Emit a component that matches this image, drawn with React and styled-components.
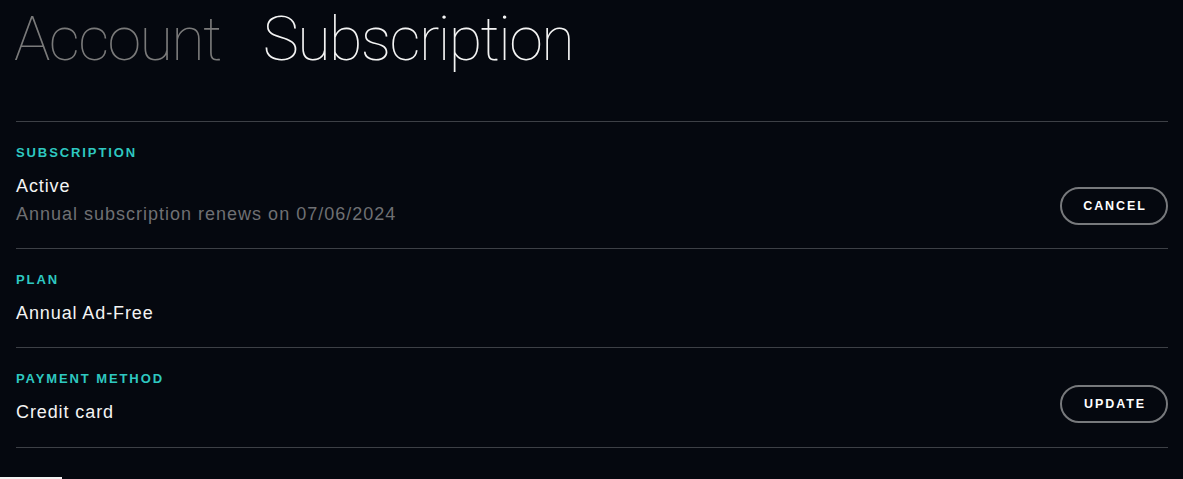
import React from 'react';
import styled, { createGlobalStyle } from 'styled-components';

const GlobalStyle = createGlobalStyle`
  html, body {
    margin: 0;
    padding: 0;
    background: #05080f;
  }
  body {
    font-family: "Liberation Sans", Arial, sans-serif;
    color: #f2f2f2;
    overflow: hidden;
  }
`;

const Page = styled.div`
  width: 1183px;
  height: 479px;
  box-sizing: border-box;
  padding: 0 15px 0 16px;
  display: flex;
  flex-direction: column;
  position: relative;
`;

const Title = styled.h1`
  margin: 0 0 0 -2px;
  padding-top: 3px;
  height: 121px;
  box-sizing: border-box;
  display: flex;
  gap: 42px;
  font-family: Roboto, "Liberation Sans", sans-serif;
  font-weight: 100;
  font-size: 61px;
  line-height: 72px;
  letter-spacing: -1.6px;
`;

const Crumb = styled.span`
  color: ${p => (p.current ? '#f4f4f4' : '#7a7a7a')};
`;

const List = styled.div`
  border-top: 1px solid #3d4046;
`;

const Row = styled.section`
  display: flex;
  align-items: flex-end;
  justify-content: space-between;
  padding: 23px 0 22px;
  border-bottom: 1px solid #3d4046;

  &:last-child {
    padding-bottom: 23px;
  }
`;

const Info = styled.div`
  display: flex;
  flex-direction: column;
`;

const Label = styled.div`
  font-size: 13px;
  line-height: 16px;
  font-weight: 700;
  letter-spacing: 1.9px;
  text-transform: uppercase;
  color: #2ec8c1;
  margin-bottom: 13px;
`;

const Value = styled.div`
  font-size: 18px;
  line-height: 24px;
  letter-spacing: 0.9px;
  color: #f4f4f4;
`;

const Note = styled.div`
  margin-top: 4px;
  font-size: 18px;
  line-height: 24px;
  letter-spacing: 1px;
  color: #6f7073;
`;

const PillButton = styled.button`
  width: 108px;
  height: 38px;
  margin-bottom: 1px;
  border-radius: 19px;
  border: 2px solid #77797c;
  background: transparent;
  color: #ffffff;
  font-family: "Liberation Sans", Arial, sans-serif;
  font-weight: 700;
  font-size: 12.5px;
  letter-spacing: 1.9px;
  padding: 0 0 0 2px;
  cursor: pointer;
`;

const FooterMark = styled.div`
  position: absolute;
  left: 0;
  bottom: 0;
  width: 62px;
  height: 2px;
  background: #f2f2f2;
`;

const rows = [
  {
    label: 'Subscription',
    value: 'Active',
    note: 'Annual subscription renews on 07/06/2024',
    action: 'Cancel',
  },
  { label: 'Plan', value: 'Annual Ad-Free' },
  { label: 'Payment method', value: 'Credit card', action: 'Update' },
];

export default function App() {
  return (
    <>
      <GlobalStyle />
      <Page>
        <Title>
          <Crumb>Account</Crumb>
          <Crumb current>Subscription</Crumb>
        </Title>
        <List>
          {rows.map(row => (
            <Row key={row.label}>
              <Info>
                <Label>{row.label}</Label>
                <Value>{row.value}</Value>
                {row.note && <Note>{row.note}</Note>}
              </Info>
              {row.action && <PillButton>{row.action.toUpperCase()}</PillButton>}
            </Row>
          ))}
        </List>
        <FooterMark />
      </Page>
    </>
  );
}
